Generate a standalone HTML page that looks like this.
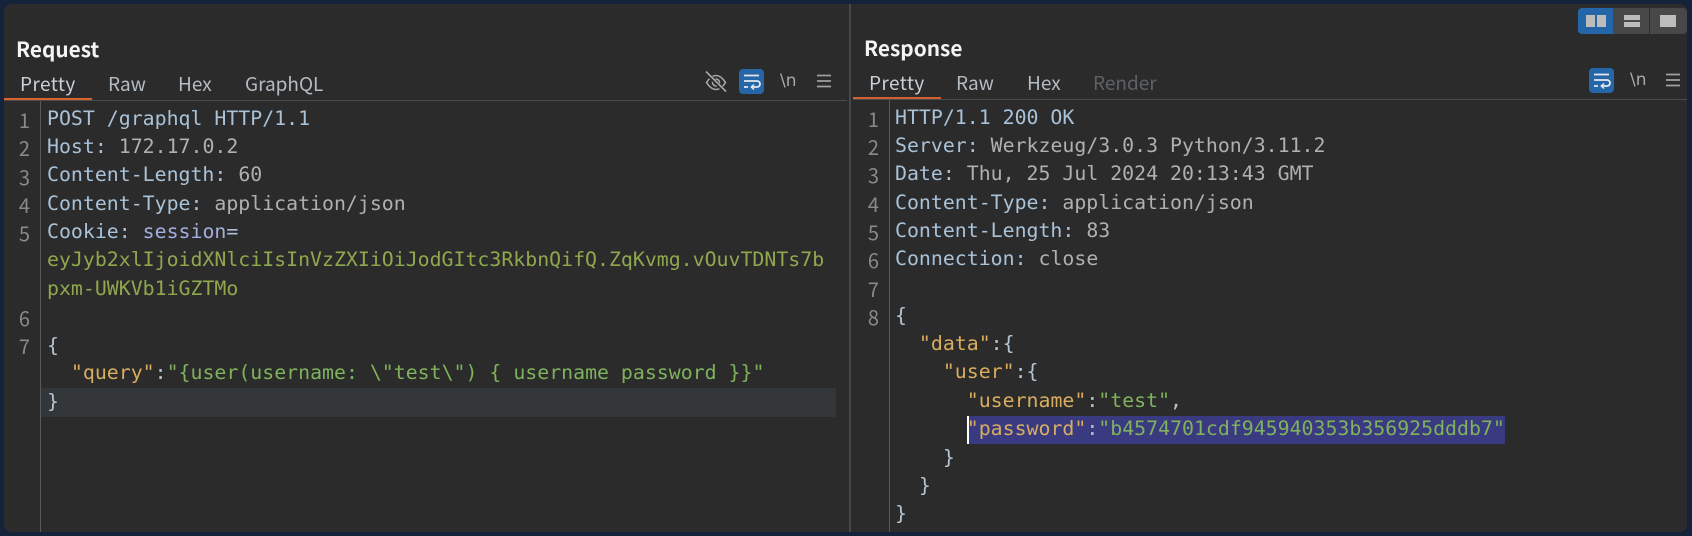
<!DOCTYPE html>
<html><head><meta charset="utf-8">
<style>
html,body{margin:0;padding:0;width:1692px;height:536px;overflow:hidden;background:#15233a}
#p{position:absolute;left:4px;top:4px;width:1683px;height:528px;background:#2b2b2b;border-radius:7px}
.a{position:absolute;white-space:pre;filter:blur(.3px)}
.t{font-family:"Noto Sans CJK JP","Liberation Sans",sans-serif;font-size:20.8px;font-weight:700;color:#f4f4f4;line-height:26px;height:26px}
.tab{font-family:"Noto Sans CJK JP","Liberation Sans",sans-serif;font-size:19px;color:#b4bcc4;line-height:26px;height:26px}
.n{font-family:"Noto Sans CJK JP","Liberation Sans",sans-serif;font-size:20px;color:#8a8a8a;line-height:28px;height:28px;width:30px;text-align:right}
.c{font-family:"DejaVu Sans Mono","Liberation Mono",monospace;font-size:19.87px;line-height:28px;height:28px;color:#b0b0b0}
.h{color:#a9c2d8}.s{color:#a3afe0}.o{color:#8fa84e}.k{color:#d8ad5f}.p{color:#b4c4d2}.g{color:#7fb25c}.w{color:#b0b0b0}
.r{position:absolute}
</style></head><body>
<div id="p"></div>

<div class="r" style="left:849px;top:4px;width:2px;height:528px;background:#484848"></div>
<div class="r" style="left:4px;top:100px;width:843px;height:1px;background:#4b4b4b"></div>
<div class="r" style="left:853px;top:99px;width:834px;height:1px;background:#4b4b4b"></div>
<div class="r" style="left:4px;top:98px;width:88px;height:2px;background:#d9622e"></div>
<div class="r" style="left:853px;top:97px;width:88px;height:2px;background:#d0602f"></div>
<div class="r" style="left:40px;top:101px;width:1px;height:431px;background:#5a5a5a"></div>
<div class="r" style="left:889px;top:100px;width:1px;height:432px;background:#5a5a5a"></div>
<div class="r" style="left:41px;top:388px;width:795px;height:29px;background:#33373a"></div>
<div class="r" style="left:969px;top:416px;width:536px;height:28px;background:#3a3a80"></div>
<div class="r" style="left:967px;top:416px;width:2px;height:28px;background:#fff"></div>

<div class="a t" style="left:16px;top:35px">Request</div>
<div class="a t" style="left:864px;top:34px">Response</div>

<div class="a tab" style="left:20px;top:71px;color:#c8d0d8;letter-spacing:.4px">Pretty</div>
<div class="a tab" style="left:108px;top:71px">Raw</div>
<div class="a tab" style="left:178px;top:71px">Hex</div>
<div class="a tab" style="left:245px;top:71px">GraphQL</div>
<div class="a tab" style="left:869px;top:70px;color:#c8d0d8;letter-spacing:.4px">Pretty</div>
<div class="a tab" style="left:956px;top:70px">Raw</div>
<div class="a tab" style="left:1027px;top:70px">Hex</div>
<div class="a tab" style="left:1093px;top:70px;color:#5e6266">Render</div>

<!-- left gutter -->
<div class="a n" style="left:0;top:106px">1</div>
<div class="a n" style="left:0;top:134px">2</div>
<div class="a n" style="left:0;top:163px">3</div>
<div class="a n" style="left:0;top:191px">4</div>
<div class="a n" style="left:0;top:219px">5</div>
<div class="a n" style="left:0;top:304px">6</div>
<div class="a n" style="left:0;top:332px">7</div>
<!-- left code -->
<div class="a c" style="left:47px;top:105px"><span class="h">POST /graphql HTTP/1.1</span></div>
<div class="a c" style="left:47px;top:133px"><span class="h">Host:</span><span class="w"> 172.17.0.2</span></div>
<div class="a c" style="left:47px;top:161px"><span class="h">Content-Length:</span><span class="w"> 60</span></div>
<div class="a c" style="left:47px;top:190px"><span class="h">Content-Type:</span><span class="w"> application/json</span></div>
<div class="a c" style="left:47px;top:218px"><span class="h">Cookie:</span> <span class="s">session</span><span class="h">=</span></div>
<div class="a c" style="left:47px;top:246px"><span class="o">eyJyb2xlIjoidXNlciIsInVzZXIiOiJodGItc3RkbnQifQ.ZqKvmg.vOuvTDNTs7b</span></div>
<div class="a c" style="left:47px;top:275px"><span class="o">pxm-UWKVb1iGZTMo</span></div>
<div class="a c" style="left:47px;top:332px"><span class="p">{</span></div>
<div class="a c" style="left:47px;top:359px">  <span class="k">"query"</span><span class="p">:</span><span class="g">"{user(username: \"test\") { username password }}"</span></div>
<div class="a c" style="left:47px;top:388px"><span class="p">}</span></div>

<!-- right gutter -->
<div class="a n" style="left:848px;top:105px;width:31px">1</div>
<div class="a n" style="left:848px;top:133px;width:31px">2</div>
<div class="a n" style="left:848px;top:161px;width:31px">3</div>
<div class="a n" style="left:848px;top:190px;width:31px">4</div>
<div class="a n" style="left:848px;top:218px;width:31px">5</div>
<div class="a n" style="left:848px;top:246px;width:31px">6</div>
<div class="a n" style="left:848px;top:275px;width:31px">7</div>
<div class="a n" style="left:848px;top:303px;width:31px">8</div>
<!-- right code -->
<div class="a c" style="left:895px;top:104px"><span class="h">HTTP/1.1 200 OK</span></div>
<div class="a c" style="left:895px;top:132px"><span class="h">Server:</span><span class="w"> Werkzeug/3.0.3 Python/3.11.2</span></div>
<div class="a c" style="left:895px;top:160px"><span class="h">Date:</span><span class="w"> Thu, 25 Jul 2024 20:13:43 GMT</span></div>
<div class="a c" style="left:895px;top:189px"><span class="h">Content-Type:</span><span class="w"> application/json</span></div>
<div class="a c" style="left:895px;top:217px"><span class="h">Content-Length:</span><span class="w"> 83</span></div>
<div class="a c" style="left:895px;top:245px"><span class="h">Connection:</span><span class="w"> close</span></div>
<div class="a c" style="left:895px;top:302px"><span class="p">{</span></div>
<div class="a c" style="left:895px;top:330px">  <span class="k">"data"</span><span class="p">:{</span></div>
<div class="a c" style="left:895px;top:358px">    <span class="k">"user"</span><span class="p">:{</span></div>
<div class="a c" style="left:895px;top:387px">      <span class="k">"username"</span><span class="p">:</span><span class="g">"test"</span><span class="p">,</span></div>
<div class="a c" style="left:895px;top:415px">      <span class="k">"password"</span><span class="p">:</span><span class="g">"b4574701cdf945940353b356925dddb7"</span></div>
<div class="a c" style="left:895px;top:444px">    <span class="p">}</span></div>
<div class="a c" style="left:895px;top:472px">  <span class="p">}</span></div>
<div class="a c" style="left:895px;top:500px"><span class="p">}</span></div>

<!-- layout switcher -->
<svg class="r" style="left:1578px;top:8px" width="109" height="26" viewBox="0 0 109 26">
<path d="M4 0H35V26H4a4 4 0 0 1-4-4V4a4 4 0 0 1 4-4z" fill="#2566a8"/>
<rect x="35" width="36" height="26" fill="#484848"/>
<path d="M72 0H105a4 4 0 0 1 4 4V22a4 4 0 0 1-4 4H72z" fill="#484848"/>
<rect x="8" y="7" width="9" height="12" fill="#bcbcbc"/><rect x="19" y="7" width="9" height="12" fill="#bcbcbc"/>
<rect x="46" y="7" width="16" height="5" fill="#bcbcbc"/><rect x="46" y="14" width="16" height="5" fill="#bcbcbc"/>
<rect x="82" y="7" width="16" height="12" fill="#bcbcbc"/>
</svg>

<!-- left toolbar -->
<svg class="r" style="left:704px;top:70px" width="24" height="24" viewBox="0 0 24 24" fill="none" stroke="#a8a8a8" stroke-width="1.6">
<path d="M2.5 12.5C6 7 9 5.5 12 5.5s6 1.5 9.500 7C18 18 15 19.500 12 19.500S6 18 2.500 12.500z"/>
<circle cx="12" cy="12.500" r="3.500"/>
<path d="M2 2.500L22 22.500" stroke="#2b2b2b" stroke-width="4"/>
<path d="M2 1.500L22 21.500"/>
</svg>
<div class="r" style="left:739px;top:69px;width:25px;height:25px;background:#2566a8;border-radius:4px"></div>
<svg class="r" style="left:739px;top:69px" width="25" height="25" viewBox="0 0 25 25" fill="none" stroke="#e4e8ee" stroke-width="1.800">
<path d="M5 6.500H20M5 12H18a2.800 2.800 0 0 1 0 6H12.500M5 18H9"/><path d="M15 15.500L12.300 18L15 20.500" stroke-width="1.500"/>
</svg>
<div class="a" style="left:780px;top:68px;font:17px/26px 'DejaVu Sans',sans-serif;color:#a8a8a8">\n</div>
<svg class="r" style="left:816px;top:73px" width="16" height="16" viewBox="0 0 16 16" stroke="#a0a0a0" stroke-width="1.800"><path d="M1 2.500H15M1 8H15M1 13.500H15"/></svg>

<!-- right toolbar -->
<div class="r" style="left:1589px;top:68px;width:25px;height:25px;background:#2566a8;border-radius:4px"></div>
<svg class="r" style="left:1589px;top:68px" width="25" height="25" viewBox="0 0 25 25" fill="none" stroke="#e4e8ee" stroke-width="1.800">
<path d="M5 6.500H20M5 12H18a2.800 2.800 0 0 1 0 6H12.500M5 18H9"/><path d="M15 15.500L12.300 18L15 20.500" stroke-width="1.500"/>
</svg>
<div class="a" style="left:1630px;top:67px;font:17px/26px 'DejaVu Sans',sans-serif;color:#a8a8a8">\n</div>
<svg class="r" style="left:1665px;top:72px" width="16" height="16" viewBox="0 0 16 16" stroke="#a0a0a0" stroke-width="1.800"><path d="M1 2.500H15M1 8H15M1 13.500H15"/></svg>
</body></html>
